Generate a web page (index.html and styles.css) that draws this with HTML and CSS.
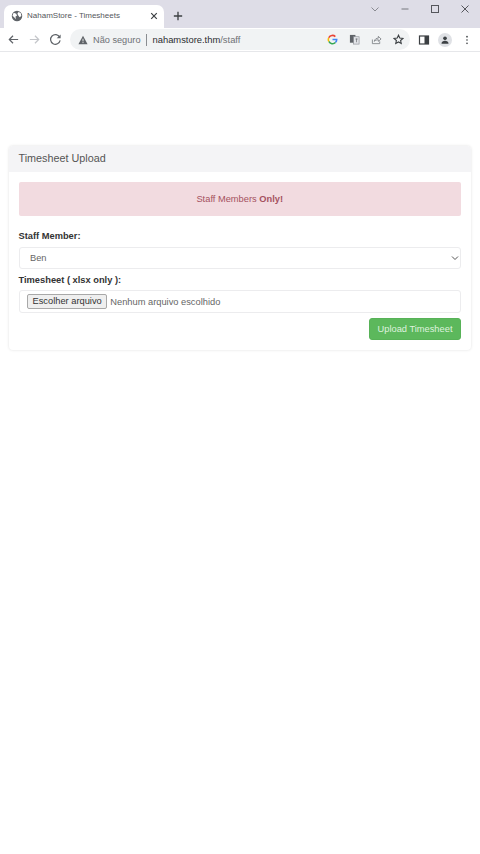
FILE: index.html
```html
<!DOCTYPE html>
<html lang="pt">
<head>
<meta charset="utf-8">
<title>NahamStore - Timesheets</title>
<link rel="stylesheet" href="styles.css">
</head>
<body>
<div class="chrome">
  <div class="tabstrip">
    <div class="tab">
      <svg class="favicon" viewBox="0 0 16 16"><circle cx="8" cy="8" r="7" fill="#5f6368"/><path d="M3.500 3.500l3.500 1.500 1 2.800-2 1 .5 3.500-2-2.300L2 7.500zM10 2.500l3 1.500.8 4-2.300 1.500-1.800-2.300L8.500 5z" fill="#fff"/></svg>
      <span class="tab-title">NahamStore - Timesheets</span>
      <svg class="tab-close" viewBox="0 0 10 10"><path d="M1.500 1.500l7 7M8.500 1.500l-7 7" stroke="#3c4043" stroke-width="1.500"/></svg>
    </div>
    <svg class="newtab" viewBox="0 0 12 12"><path d="M6 1v10M1 6h10" stroke="#3c4043" stroke-width="1.600"/></svg>
    <div class="win-controls">
      <svg class="win" viewBox="0 0 12 12"><path d="M2.500 4.500L6 8l3.500-3.500" fill="none" stroke="#8a8b92" stroke-width="1"/></svg>
      <svg class="win" viewBox="0 0 12 12"><path d="M2.500 6h7" stroke="#77787e" stroke-width="1"/></svg>
      <svg class="win" viewBox="0 0 12 12"><rect x="2.500" y="2.500" width="7" height="7" fill="none" stroke="#55565c" stroke-width="1"/></svg>
      <svg class="win" viewBox="0 0 12 12"><path d="M2.500 2.500l7 7M9.500 2.500l-7 7" stroke="#55565c" stroke-width="1"/></svg>
    </div>
  </div>
  <div class="toolbar">
    <svg class="nav" viewBox="0 0 14 14"><path d="M12 7H2.500M6.500 3L2.500 7l4 4" fill="none" stroke="#5f6368" stroke-width="1.300"/></svg>
    <svg class="nav" viewBox="0 0 14 14"><path d="M2 7h9.500M7.500 3l4 4-4 4" fill="none" stroke="#c4c6ca" stroke-width="1.300"/></svg>
    <svg class="nav" viewBox="0 0 14 14"><path d="M11.500 4.500A5.200 5.200 0 1 0 12 8" fill="none" stroke="#5f6368" stroke-width="1.300"/><path d="M12.500 1.500v4.200H8.300z" fill="#5f6368"/></svg>
    <div class="omnibox">
      <svg class="warn" viewBox="0 0 12 12"><path d="M6 1l5.500 10h-11z" fill="#5f6368"/><path d="M6 4.500v3.200M6 8.500v1.200" stroke="#fff" stroke-width="1"/></svg>
      <span class="secure">Não seguro</span>
      <span class="sep"></span>
      <span class="url"><span class="host">nahamstore.thm</span>/staff</span>
      <svg class="omni-icon omni-first" viewBox="0 0 12 12"><path d="M6 6h4.600a4.600 4.600 0 0 1-1.400 3.300" fill="none" stroke="#4285f4" stroke-width="1.700"/><path d="M9.200 9.300A4.500 4.500 0 0 1 2 8.100" fill="none" stroke="#34a853" stroke-width="1.700"/><path d="M2 8.100a4.500 4.500 0 0 1 0-4.200" fill="none" stroke="#fbbc05" stroke-width="1.700"/><path d="M2 3.900a4.500 4.500 0 0 1 7.100-1.100" fill="none" stroke="#ea4335" stroke-width="1.700"/></svg>
      <svg class="omni-icon" viewBox="0 0 12 12"><rect x="1" y="1" width="6" height="8.500" fill="#5f6368"/><rect x="5" y="3" width="6" height="8" fill="#e3e5e9" stroke="#8b8e94" stroke-width=".7"/><path d="M7 5.500h2.500M8.200 5v4" stroke="#5f6368" stroke-width=".7"/></svg>
      <svg class="omni-icon" viewBox="0 0 12 12"><path d="M1.500 6v4.500h8V8M3.500 8c.5-2.500 2.500-3.500 4.500-3.500V2.500L11 5.500 8 8V6.300C6 6.300 4.800 6.800 3.500 8z" fill="none" stroke="#7b7e83" stroke-width=".9"/></svg>
      <svg class="omni-icon" viewBox="0 0 12 12"><path d="M6 1.300l1.400 3.100 3.400.4-2.500 2.300.7 3.300L6 8.700l-3 1.700.7-3.300L1.200 4.800l3.400-.4z" fill="none" stroke="#3c4043" stroke-width="1.200"/></svg>
    </div>
    <svg class="side" viewBox="0 0 12 12"><rect x="1.500" y="2" width="9" height="8" fill="none" stroke="#3c4043" stroke-width="1.200"/><rect x="6.500" y="2" width="4" height="8" fill="#3c4043"/></svg>
    <div class="avatar"><svg viewBox="0 0 12 12"><circle cx="6" cy="4" r="2.200" fill="#3c4043"/><path d="M1.800 10.500c0-2.600 2-3.500 4.200-3.500s4.200.9 4.200 3.500z" fill="#3c4043"/></svg></div>
    <svg class="menu" viewBox="0 0 4 12"><circle cx="2" cy="2" r="1" fill="#3c4043"/><circle cx="2" cy="6" r="1" fill="#3c4043"/><circle cx="2" cy="10" r="1" fill="#3c4043"/></svg>
  </div>
</div>
<main class="page">
  <section class="panel">
    <header class="panel-heading">Timesheet Upload</header>
    <div class="panel-body">
      <div class="alert">Staff Members <strong>Only!</strong></div>
      <label class="label">Staff Member:</label>
      <div class="select-wrap">
        <select class="control select-control"><option>Ben</option></select>
        <svg class="select-chevron" viewBox="0 0 8 8"><path d="M1 2.500L4 5.500l3-3" fill="none" stroke="#555" stroke-width="1"/></svg>
      </div>
      <label class="label label-second">Timesheet ( xlsx only ):</label>
      <div class="control file-control">
        <span class="file-button">Escolher arquivo</span>
        <span class="file-name">Nenhum arquivo escolhido</span>
      </div>
      <div class="actions"><button class="submit">Upload Timesheet</button></div>
    </div>
  </section>
</main>
</body>
</html>
```
FILE: styles.css
```css
* { box-sizing: border-box; }
html, body { margin: 0; padding: 0; background: #fff; }
body { font-family: "Liberation Sans", Arial, sans-serif; color: #333; height: 854px; overflow: hidden; }
svg { display: block; flex: none; }

.chrome { height: 52px; border-bottom: 1px solid #e6e7ea; }
.tabstrip { height: 28px; background: #dedde7; display: flex; align-items: flex-end; padding-left: 4px; }
.tab { width: 160px; height: 23px; background: #fff; border-radius: 7px 7px 0 0; display: flex; align-items: center; padding: 0 6px 2px 7px; }
.favicon { width: 12px; height: 12px; }
.tab-title { font-size: 8px; color: #55585c; margin-left: 4px; flex: 1; white-space: nowrap; }
.tab-close { width: 8px; height: 8px; }
.newtab { width: 10px; height: 10px; margin: 0 0 7px 9px; }
.win-controls { margin-left: auto; align-self: flex-start; display: flex; gap: 18px; padding: 3px 9px 0 0; }
.win { width: 12px; height: 12px; }

.toolbar { height: 23px; background: #fff; display: flex; align-items: center; padding-left: 7px; }
.nav { width: 13px; height: 13px; margin-right: 8px; }
.omnibox { width: 340px; height: 21px; background: #f1f3f4; border-radius: 11px; display: flex; align-items: center; padding-left: 8px; }
.warn { width: 10px; height: 10px; }
.secure { font-size: 9.200px; color: #6e7175; margin-left: 5px; white-space: nowrap; }
.sep { width: 1px; height: 12px; background: #8a8d91; margin: 0 5.500px; }
.url { font-size: 9.400px; color: #6e7175; white-space: nowrap; }
.host { color: #2b2d30; }
.omni-icon { width: 11px; height: 11px; margin-left: 11px; }
.omni-first { margin-left: auto; }
.omnibox .omni-icon:last-child { margin-right: 6px; }
.side { width: 12px; height: 12px; margin-left: 8px; }
.avatar { width: 14px; height: 14px; border-radius: 50%; background: #dfe1e5; margin-left: 8px; padding: 2px; }
.menu { width: 4px; height: 10px; margin-left: 13px; }

.page { padding: 94px 9px 0; }
.panel { background: #fff; border-radius: 4px; box-shadow: 0 0 3px rgba(0,0,0,.13); }
.panel-heading { height: 26px; background: #f4f4f6; padding: 0 9.500px; font-size: 10.800px; line-height: 25px; color: #555; border-radius: 4px 4px 0 0; }
.panel-body { padding: 10px 10px 10px 9.500px; }
.alert { height: 34px; background: #f2dbe0; color: #a5525f; font-size: 9.300px; line-height: 34px; text-align: center; border-radius: 2px; }
.label { display: block; font-size: 9.300px; font-weight: 700; color: #333; line-height: 12px; margin: 14px 0 5px; }
.label-second { margin: 5px 0 4px; }
.select-wrap { position: relative; }
.select-chevron { position: absolute; right: 2px; top: 7px; width: 8px; height: 8px; }
.control { display: block; width: 100%; height: 22px; background: #fff; border: 1px solid #ececee; border-radius: 3px; font-family: "Liberation Sans", Arial, sans-serif; font-size: 9.300px; color: #666; }
.select-control { appearance: none; padding-left: 10.500px; }
.file-control { display: flex; align-items: center; height: 23px; padding-left: 7.500px; }
.file-button { height: 15px; line-height: 13px; padding: 0 4.500px; background: #efefef; border: 1px solid #a8a8a8; border-radius: 2px; font-size: 9.300px; color: #333; white-space: nowrap; }
.file-name { margin-left: 3px; font-size: 9.300px; color: #666; white-space: nowrap; }
.actions { display: flex; justify-content: flex-end; margin-top: 5px; }
.submit { width: 92px; height: 22px; background: #5cb85c; border: 1px solid #57b257; border-radius: 3px; padding: 0; color: #dff2df; font-family: "Liberation Sans", Arial, sans-serif; font-size: 9.300px; }
```
